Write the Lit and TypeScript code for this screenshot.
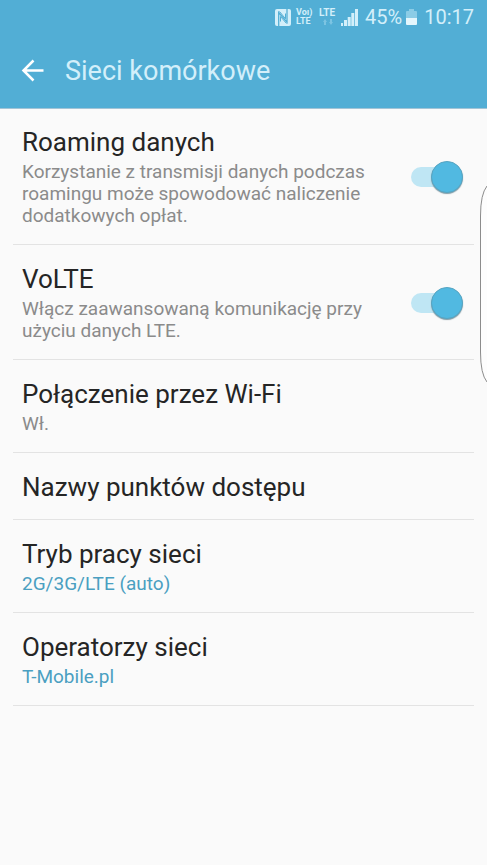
import { LitElement, html, css, nothing } from "lit";
import { customElement, property, state } from "lit/decorators.js";

interface Setting {
  id: string;
  title: string;
  summary?: string;
  accent?: boolean;
  toggle?: boolean;
}

const SETTINGS: Setting[] = [
  {
    id: "roaming",
    title: "Roaming danych",
    summary:
      "Korzystanie z transmisji danych podczas roamingu może spowodować naliczenie dodatkowych opłat.",
    toggle: true,
  },
  {
    id: "volte",
    title: "VoLTE",
    summary: "Włącz zaawansowaną komunikację przy użyciu danych LTE.",
    toggle: true,
  },
  { id: "wifi-calling", title: "Połączenie przez Wi-Fi", summary: "Wł." },
  { id: "apn", title: "Nazwy punktów dostępu" },
  { id: "mode", title: "Tryb pracy sieci", summary: "2G/3G/LTE (auto)", accent: true },
  { id: "operators", title: "Operatorzy sieci", summary: "T-Mobile.pl", accent: true },
];

@customElement("status-bar")
export class StatusBar extends LitElement {
  static styles = css`
    :host {
      display: flex;
      align-items: center;
      justify-content: flex-end;
      height: 34px;
      padding-right: 13px;
      color: #d3effa;
      font-size: 20px;
      line-height: 24px;
    }
    svg {
      display: block;
      flex: none;
    }
    .nfc {
      margin-right: 5px;
    }
    .label {
      display: flex;
      flex-direction: column;
      width: 18px;
      margin-right: 5px;
      font-size: 9px;
      font-weight: 700;
      line-height: 9px;
    }
    .network {
      margin-right: 4px;
      font-size: 10px;
    }
    .arrows {
      margin: 2px 0 0 4px;
    }
    .signal {
      margin-right: 7px;
    }
    .battery {
      margin: 0 7px 0 4px;
    }
  `;

  render() {
    return html`
      <svg class="nfc" width="16" height="17" viewBox="0 0 16 17" aria-label="NFC">
        <rect width="16" height="17" rx="2" fill="#d3effa" />
        <path d="M3.7 17V3.6L12 13.2V0" fill="none" stroke="#52aed5" stroke-width="1.3" />
        <path d="M5.8 0 10.2 5.2V9.2L5.8 4zM5.8 7.8 10.2 13V17L5.8 12z" fill="#d3effa" />
        <path d="M4.5 2.5 10.5 9.8V4.5M11.5 14.5 5.5 7.5V12.5" fill="none" stroke="#52aed5" />
      </svg>
      <span class="label"><span>Voı)</span><span>LTE</span></span>
      <span class="label network">
        <span>LTE</span>
        <svg class="arrows" width="11" height="7" viewBox="0 0 11 7" aria-hidden="true">
          <path d="M0 3 2 0l2 3H3v3H1V3zM6 3h1V0h2v3h1L8 6z" fill="#7cc4e2" />
        </svg>
      </span>
      <svg class="signal" width="17" height="17" viewBox="0 0 17 17" aria-label="Zasięg">
        <path
          d="M0 14h2v3H0zM3 11h3v6H3zM6.7 8h3v9h-3zM10.3 4h3v13h-3zM14 0h3v17h-3z"
          fill="#d3effa"
        />
      </svg>
      <span>45%</span>
      <svg class="battery" width="11" height="17" viewBox="0 0 11 17" aria-label="Bateria">
        <path d="M3 0h5v2h2q1 0 1 1v6H0V3q0-1 1-1h2z" fill="#8bcce6" />
        <path d="M0 9h11v6q0 1-1 1H1q-1 0-1-1z" fill="#e4f6fc" />
      </svg>
      <span>10:17</span>
    `;
  }
}

@customElement("setting-row")
export class SettingRow extends LitElement {
  @property({ attribute: false }) setting!: Setting;
  @state() private on = true;

  static styles = css`
    :host {
      display: block;
      margin: 0 13px;
      border-bottom: 1px solid #e3e3e3;
    }
    .row {
      box-sizing: border-box;
      display: flex;
      align-items: center;
      gap: 20px;
      width: 100%;
      padding: 19px 11px 17px 9px;
      border: 0;
      background: none;
      font: inherit;
      text-align: left;
      color: #252525;
    }
    .text {
      display: flex;
      flex: 1;
      flex-direction: column;
      gap: 4px;
      max-width: 350px;
    }
    .title {
      font-size: 26px;
      line-height: 30px;
    }
    .summary {
      font-size: 19px;
      line-height: 22px;
      color: #8b8b8b;
    }
    .accent {
      color: #4a9fc1;
    }
    .switch {
      appearance: none;
      position: relative;
      display: flex;
      flex: none;
      align-items: center;
      width: 52px;
      height: 32px;
      margin: 0 0 0 auto;
    }
    .switch::before {
      content: "";
      width: 46px;
      height: 20px;
      border-radius: 10px;
      background: #d5d5d5;
    }
    .switch::after {
      content: "";
      position: absolute;
      left: 0;
      top: 0;
      box-sizing: border-box;
      width: 32px;
      height: 32px;
      border: 1px solid #b5b5b5;
      border-radius: 50%;
      background: #f4f4f4;
    }
    .switch:checked::before {
      background: #bfe6f4;
    }
    .switch:checked::after {
      left: auto;
      right: 0;
      border-color: #56a5c3;
      background: #51b9e1;
      box-shadow: 0 1px 1px #7f9ba6;
    }
  `;

  private text() {
    const { title, summary, accent } = this.setting;
    return html`<span class="text">
      <span class="title">${title}</span>
      ${summary ? html`<span class="summary ${accent ? "accent" : ""}">${summary}</span>` : nothing}
    </span>`;
  }

  render() {
    if (!this.setting.toggle) {
      return html`<button class="row" type="button">${this.text()}</button>`;
    }
    return html`<label class="row" for=${this.setting.id}>
      ${this.text()}
      <input
        class="switch"
        id=${this.setting.id}
        type="checkbox"
        role="switch"
        .checked=${this.on}
        @change=${(e: Event) => (this.on = (e.target as HTMLInputElement).checked)}
      />
    </label>`;
  }
}

@customElement("app-root")
export class AppRoot extends LitElement {
  static styles = css`
    :host {
      display: block;
      position: relative;
      min-height: 100vh;
      overflow: hidden;
      background: #fafafa;
      font-family: Roboto, "Noto Sans", sans-serif;
    }
    header {
      background: #52aed5;
      box-shadow: 0 1px #a3c4d6;
    }
    .bar {
      display: flex;
      align-items: center;
      gap: 20px;
      height: 74px;
      padding-left: 21px;
    }
    .back {
      display: flex;
      padding: 0;
      border: 0;
      background: none;
    }
    h1 {
      margin: 0;
      font-size: 27px;
      font-weight: 400;
      line-height: 34px;
      color: #d3effa;
    }
    .edge {
      position: absolute;
      right: 0;
      top: 184px;
    }
  `;

  render() {
    return html`
      <header>
        <status-bar></status-bar>
        <div class="bar">
          <button class="back" type="button" aria-label="Wstecz">
            <svg width="24" height="24" viewBox="0 0 24 24" aria-hidden="true">
              <path d="M12.5 1.5 2.5 11.5l10 10M2.5 11.5H22.5" fill="none" stroke="#fff" stroke-width="2.5" />
            </svg>
          </button>
          <h1>Sieci komórkowe</h1>
        </div>
      </header>
      <main>
        ${SETTINGS.map((s) => html`<setting-row .setting=${s}></setting-row>`)}
      </main>
      <svg class="edge" width="7" height="200" viewBox="0 0 7 200" aria-hidden="true">
        <path d="M7 2Q.5 10 .5 32V168Q.5 190 7 198" fill="#fdfdfd" stroke="#8c8c8c" />
      </svg>
    `;
  }
}
